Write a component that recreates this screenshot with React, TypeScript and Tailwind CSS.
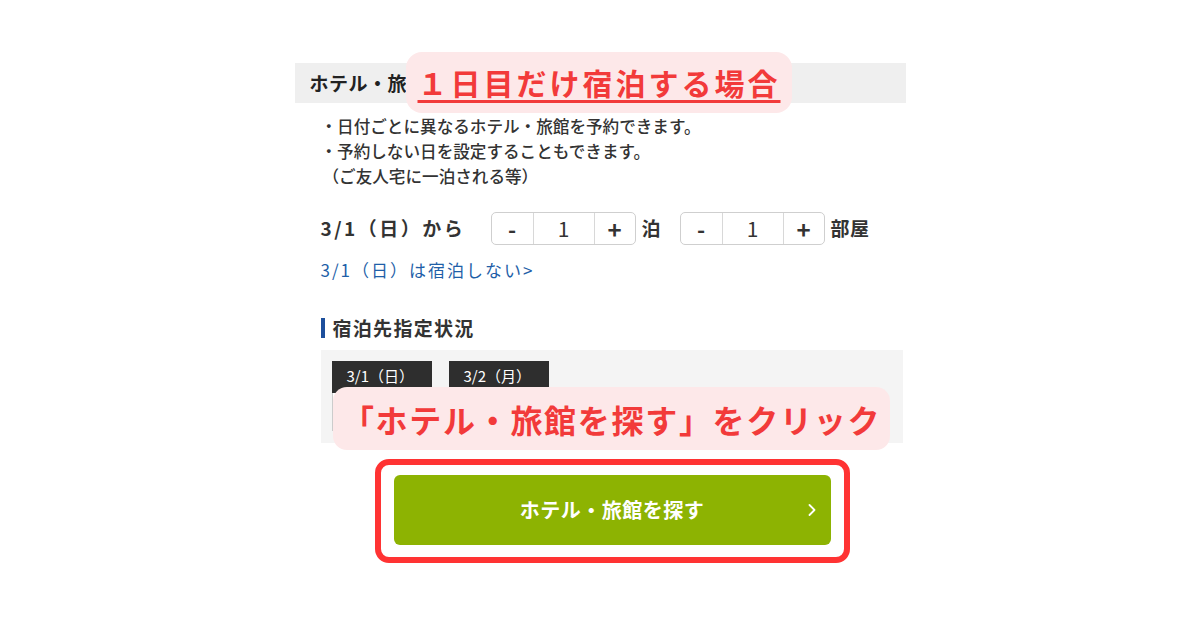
const jp = "font-['Noto_Sans_CJK_JP','Noto_Sans',sans-serif]";

function Stepper({ value }: { value: number }) {
  return (
    <div className="flex h-[33px] w-[145px] items-stretch rounded-[5px] border border-[#cfcfcf] bg-white">
      <div className="flex w-[42px] items-center justify-center border-r border-[#d8d8d8] text-[22px] font-bold text-[#333]">-</div>
      <div className="flex flex-1 items-center justify-center border-r border-[#d8d8d8] text-[21px] font-normal text-[#333]">{value}</div>
      <div className="flex w-[40px] items-center justify-center text-[24px] font-bold text-[#333]">+</div>
    </div>
  );
}

function DateTab({ label }: { label: string }) {
  return (
    <div className="flex flex-col">
      <div className="flex h-[32px] w-[100px] items-center pl-[15px] text-[15px] text-white bg-[#2e2e2e]">{label}</div>
      <div className="h-[38px] w-[100px] border border-t-0 border-[#cccccc] bg-white"></div>
    </div>
  );
}

export default function App() {
  return (
    <div className={`relative h-[630px] w-[1200px] overflow-hidden bg-white ${jp}`}>
      <div className="mx-auto w-[611px] pt-[63px]">
        {/* Header bar */}
        <div className="flex h-[40px] items-center bg-[#efefef] pl-[15px] text-[19px] font-bold tracking-[0.5px] text-[#222]">
          ホテル・旅館
        </div>

        <div className="pl-[26px]">
          {/* Notes */}
          <div className="mt-[11px] text-[16.6px] font-medium leading-[25px] text-[#333]">
            <p>・日付ごとに異なるホテル・旅館を予約できます。</p>
            <p>・予約しない日を設定することもできます。</p>
            <p className="pl-[2px]">（ご友人宅に一泊される等）</p>
          </div>

          {/* Stepper row */}
          <div className="mt-[23px] flex items-center text-[19px] font-bold text-[#333]">
            <span className="w-[170px] tracking-[2.5px]">3/1（日）から</span>
            <Stepper value={1} />
            <span className="ml-[6px] w-[38px]">泊</span>
            <Stepper value={1} />
            <span className="ml-[6px] tracking-[0.5px]">部屋</span>
          </div>

          <p className="mt-[14px] text-[17px] leading-[22px] tracking-[2px] text-[#1f5fa8]">3/1（日）は宿泊しない&gt;</p>

          {/* Status heading */}
          <div className="mt-[33px] flex items-center gap-[8px]">
            <div className="h-[20px] w-[4px] bg-[#1d4f9c]"></div>
            <span className="text-[19px] font-bold tracking-[1.3px] text-[#333]">宿泊先指定状況</span>
          </div>

          {/* Status panel */}
          <div className="mt-[7px] flex h-[93px] w-[582px] gap-[17px] bg-[#f4f4f4] px-[11px] pt-[11px]">
            <DateTab label="3/1（日）" />
            <DateTab label="3/2（月）" />
          </div>
        </div>

        {/* Search button */}
        <div className="mt-[16px] flex justify-center pl-[24px]">
          <div className="rounded-[14px] border-[6px] border-[#ff3333] bg-white px-[13px] pt-[10px] pb-[12px]">
            <button className="relative flex h-[70px] w-[437px] items-center justify-center rounded-[6px] bg-[#8db302] text-[20px] font-bold tracking-[0.5px] text-white">
              ホテル・旅館を探す
              <svg className="absolute right-[14px] top-1/2 -translate-y-1/2" width="10" height="14" viewBox="0 0 10 14" fill="none">
                <path d="M2.5 2 L7.5 7 L2.5 12" stroke="white" strokeWidth="1.8" strokeLinecap="round" strokeLinejoin="round" />
              </svg>
            </button>
          </div>
        </div>
      </div>

      {/* Callout: title */}
      <div className="absolute left-[406px] top-[52px] flex h-[61px] w-[386px] items-center justify-center rounded-[16px] bg-[#fde8e9]">
        <span className="text-[30px] font-bold tracking-[3px] text-[#f23a3a] underline decoration-[3px] underline-offset-[5px]">
          １日目だけ宿泊する場合
        </span>
      </div>

      {/* Callout: instruction */}
      <div className="absolute left-[333px] top-[387px] flex h-[63px] w-[557px] items-center justify-center rounded-[14px] bg-[#fde8e9]">
        <span className="text-[32px] font-bold tracking-[1.7px] text-[#f23a3a]">
          「ホテル・旅館を探す」をクリック
        </span>
      </div>
    </div>
  );
}
